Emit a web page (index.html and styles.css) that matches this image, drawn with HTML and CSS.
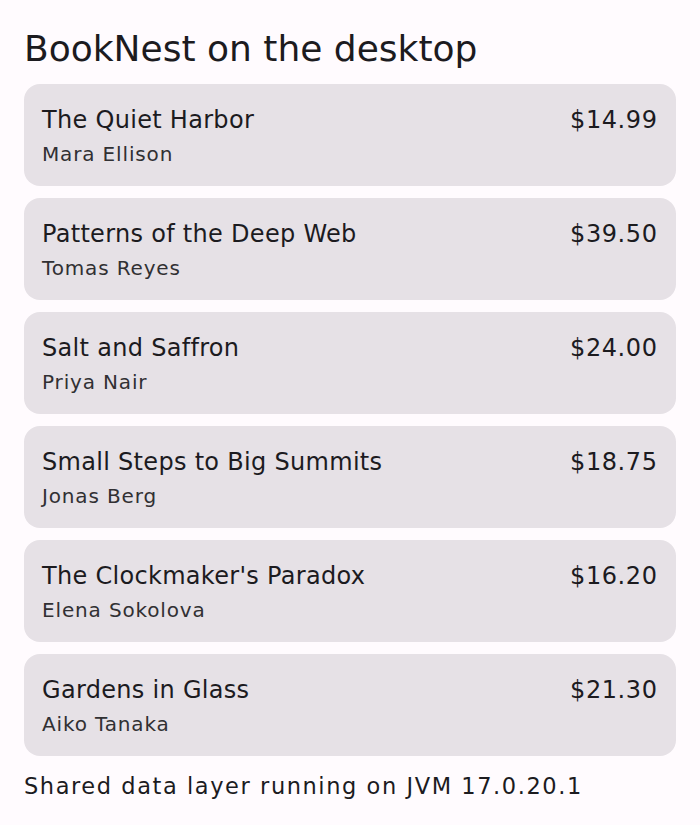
FILE: index.html
```html
<!DOCTYPE html>
<html>
<head>
<meta charset="utf-8">
<link rel="stylesheet" href="styles.css">
</head>
<body>
<main class="page">
  <h1 class="heading">BookNest on the desktop</h1>
  <ul class="list">
    <li class="card"><div class="row"><span class="title">The Quiet Harbor</span><span class="price">$14.99</span></div><span class="author">Mara Ellison</span></li>
    <li class="card"><div class="row"><span class="title">Patterns of the Deep Web</span><span class="price">$39.50</span></div><span class="author">Tomas Reyes</span></li>
    <li class="card"><div class="row"><span class="title">Salt and Saffron</span><span class="price">$24.00</span></div><span class="author">Priya Nair</span></li>
    <li class="card"><div class="row"><span class="title">Small Steps to Big Summits</span><span class="price">$18.75</span></div><span class="author">Jonas Berg</span></li>
    <li class="card"><div class="row"><span class="title">The Clockmaker's Paradox</span><span class="price">$16.20</span></div><span class="author">Elena Sokolova</span></li>
    <li class="card"><div class="row"><span class="title">Gardens in Glass</span><span class="price">$21.30</span></div><span class="author">Aiko Tanaka</span></li>
  </ul>
  <p class="footer">Shared data layer running on JVM 17.0.20.1</p>
</main>
</body>
</html>
```
FILE: styles.css
```css
html, body {
  margin: 0;
  padding: 0;
  background: #fffbfe;
}
body {
  font-family: "DejaVu Sans", sans-serif;
  color: #1c1b1f;
}
.page {
  padding: 25px 24px 0;
  display: flex;
  flex-direction: column;
  gap: 12px;
}
.heading {
  margin: 0;
  font-size: 36px;
  font-weight: normal;
  line-height: 47px;
}
.list {
  list-style: none;
  margin: 0;
  padding: 0;
  display: flex;
  flex-direction: column;
  gap: 12px;
}
.card {
  background: #e6e1e6;
  border-radius: 16px;
  padding: 21px 19px 19px 18px;
  display: flex;
  flex-direction: column;
  gap: 6px;
}
.row {
  display: flex;
  justify-content: space-between;
  align-items: center;
}
.title, .price {
  font-size: 24px;
  line-height: 30px;
  letter-spacing: 0.3px;
  color: #1c1b1f;
}
.price {
  letter-spacing: 0.6px;
  margin-right: -0.6px;
}
.author {
  font-size: 20px;
  line-height: 26px;
  letter-spacing: 0.85px;
  color: #313033;
}
.footer {
  margin: 0;
  font-size: 22.5px;
  line-height: 36px;
  letter-spacing: 1.57px;
  color: #1c1b1f;
}
```
